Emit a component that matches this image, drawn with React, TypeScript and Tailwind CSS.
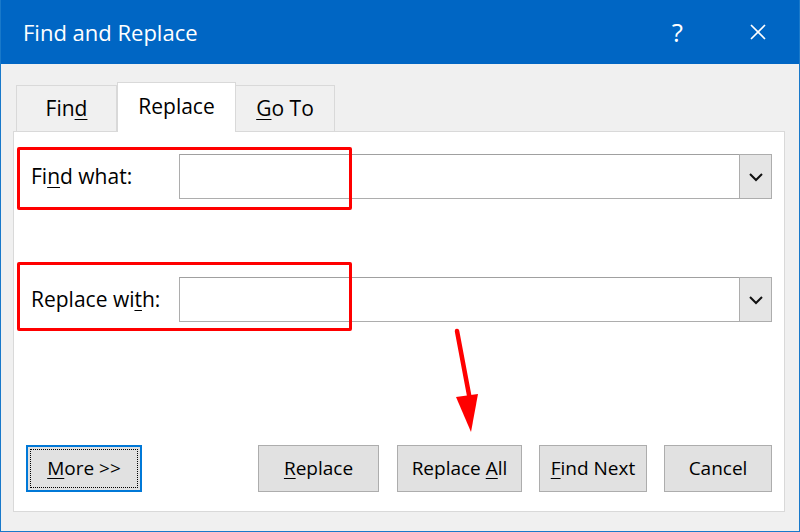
import { X } from "lucide-react";

function U({ children }: { children: string }) {
  return <span className="underline underline-offset-[3px] decoration-1">{children}</span>;
}

function Combo() {
  return (
    <div className="flex-1 h-[45px] flex border border-[#adadad] border-t-[#a0a0a0] bg-white">
      <div className="flex-1" />
      <div className="w-[33px] -my-px -mr-px bg-[#e5e5e5] border border-[#adadad] flex items-center justify-center">
        <svg width="16" height="10" viewBox="0 0 16 10" fill="none" stroke="#111" strokeWidth="2">
          <path d="M2 2l6 6 6-6" />
        </svg>
      </div>
    </div>
  );
}

function Btn({ children, className = "" }: { children: React.ReactNode; className?: string }) {
  return (
    <button className={"h-[47px] bg-[#e1e1e1] border border-[#adadad] text-[19px] text-black flex items-center justify-center " + className}>
      <span>{children}</span>
    </button>
  );
}

export default function App() {
  return (
    <div className="w-[800px] h-[532px] flex flex-col bg-[#f0f0f0] border-x border-b border-[#1979ca] font-['Open_Sans',sans-serif] text-black overflow-hidden">
      {/* title bar */}
      <div className="h-[64px] -mx-px bg-[#0066c4] flex items-center text-white shrink-0">
        <span className="ml-[23px] text-[22px] flex-1">Find and Replace</span>
        <span className="text-[26px] mr-[62px]">?</span>
        <X className="mr-[29px]" size={26} strokeWidth={1.6} />
      </div>

      <div className="pl-[12px] pt-[17px]">
        {/* tabs */}
        <div className="flex items-end ml-[3px] h-[50px]">
          <div className="w-[101px] h-[46px] border border-b-0 border-[#d9d9d9] bg-[#f0f0f0] flex items-center justify-center text-[21px]">
            <span>Fin<U>d</U></span>
          </div>
          <div className="w-[119px] h-[50px] border border-b-0 border-[#d9d9d9] bg-white flex items-center justify-center text-[21px] -mb-px relative z-10 pb-[1px]">
            Replace
          </div>
          <div className="w-[99px] h-[46px] border border-b-0 border-l-0 border-[#d9d9d9] bg-[#f0f0f0] flex items-center justify-center text-[21px]">
            <span><U>G</U>o To</span>
          </div>
        </div>

        {/* panel */}
        <div className="relative w-[772px] h-[381px] bg-white border border-[#d9d9d9] flex flex-col pt-[22px] pr-[12px]">
          <div className="flex items-center pl-[17px]">
            <span className="w-[148px] text-[21px]">Fi<U>n</U>d what:</span>
            <Combo />
          </div>
          <div className="flex items-center pl-[17px] mt-[78px]">
            <span className="w-[148px] text-[21px]">Replace wi<U>t</U>h:</span>
            <Combo />
          </div>

          <div className="flex items-center mt-auto mb-[19px] pl-[12px]">
            <button className="w-[116px] h-[47px] bg-[#e1e1e1] border-2 border-[#0078d7] p-[2px] text-[19px]">
              <div className="w-full h-full border border-dotted border-black flex items-center justify-center">
                <span><U>M</U>ore &gt;&gt;</span>
              </div>
            </button>
            <Btn className="w-[121px] ml-[116px]">
              <U>R</U>eplace
            </Btn>
            <Btn className="w-[125px] ml-[18px]">
              Replace <U>A</U>ll
            </Btn>
            <Btn className="w-[108px] ml-[17px]">
              <U>F</U>ind Next
            </Btn>
            <Btn className="w-[108px] ml-[17px]">Cancel</Btn>
          </div>

          {/* annotations */}
          <div className="absolute left-[3px] top-[15px] w-[335px] h-[63px] border-[3px] border-[#ff0000] rounded-[2px]" />
          <div className="absolute left-[3px] top-[130px] w-[335px] h-[69px] border-[3px] border-[#ff0000] rounded-[2px]" />
          <svg className="absolute left-[437px] top-[196px]" width="40" height="106" viewBox="0 0 40 106">
            <path d="M6 3 L19 72" stroke="#ff0000" strokeWidth="4.5" strokeLinecap="round" />
            <path d="M5 69 L27 66 L20 104 Z" fill="#ff0000" />
          </svg>
        </div>
      </div>
    </div>
  );
}
